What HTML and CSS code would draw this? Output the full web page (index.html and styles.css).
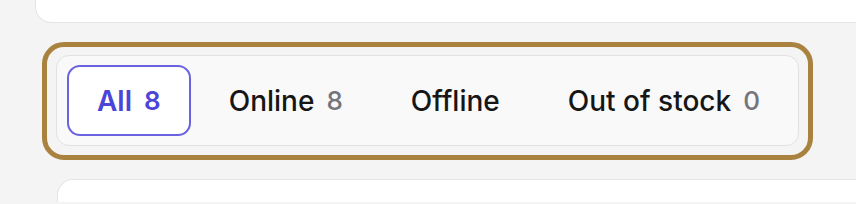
FILE: index.html
```html
<!DOCTYPE html>
<html lang="en">
<head>
  <meta charset="UTF-8" />
  <title>Products</title>
  <link rel="stylesheet" href="styles.css">
</head>
<body>

<div class="card card-top"></div>

<div class="focus-ring">
  <div class="tabs">
    <button class="tab active">All <span class="count">8</span></button>
    <button class="tab">Online <span class="count">8</span></button>
    <button class="tab">Offline</button>
    <button class="tab">Out of stock <span class="count">0</span></button>
  </div>
</div>

<div class="card card-bottom"></div>

</body>
</html>
```

FILE: styles.css
```css
body {
  margin: 0;
  font-family: Inter, 'Noto Sans', sans-serif;
  background: #f4f4f4;
  color: #161616;
  overflow: hidden;
}
.card {
  background: #fff;
  border: 1px solid #e4e4e4;
  margin-right: -40px;
}
.card-top {
  height: 22px;
  margin-left: 35px;
  border-top: none;
  border-radius: 0 0 0 16px;
}
.card-bottom {
  height: 22px;
  margin-left: 57px;
  margin-top: 19px;
  border-bottom: none;
  border-radius: 16px 0 0 0;
}
.focus-ring {
  width: 771px;
  margin: 19px 0 0 42px;
  padding: 8px 9px 9px 9px;
  border: 5px solid #a8823e;
  border-radius: 22px;
  box-sizing: border-box;
}
.tabs {
  display: flex;
  gap: 8px;
  padding: 9px 10px;
  background: #f9f9f9;
  border: 1px solid #e2e2e2;
  border-radius: 13px;
}
.tab {
  display: flex;
  flex-shrink: 0;
  align-items: center;
  gap: 12px;
  height: 71px;
  padding: 0 28px;
  font-family: inherit;
  font-size: 28px;
  font-weight: 500;
  white-space: nowrap;
  color: #161616;
  background: none;
  border: 2px solid transparent;
  border-radius: 13px;
  cursor: pointer;
}
.tab .count {
  font-size: 26px;
  color: #74747a;
}
.tab.active {
  background: #fff;
  border-color: #6a62e0;
  color: #4d44d8;
  font-weight: 600;
}
.tab.active .count {
  color: #4d44d8;
}
```
